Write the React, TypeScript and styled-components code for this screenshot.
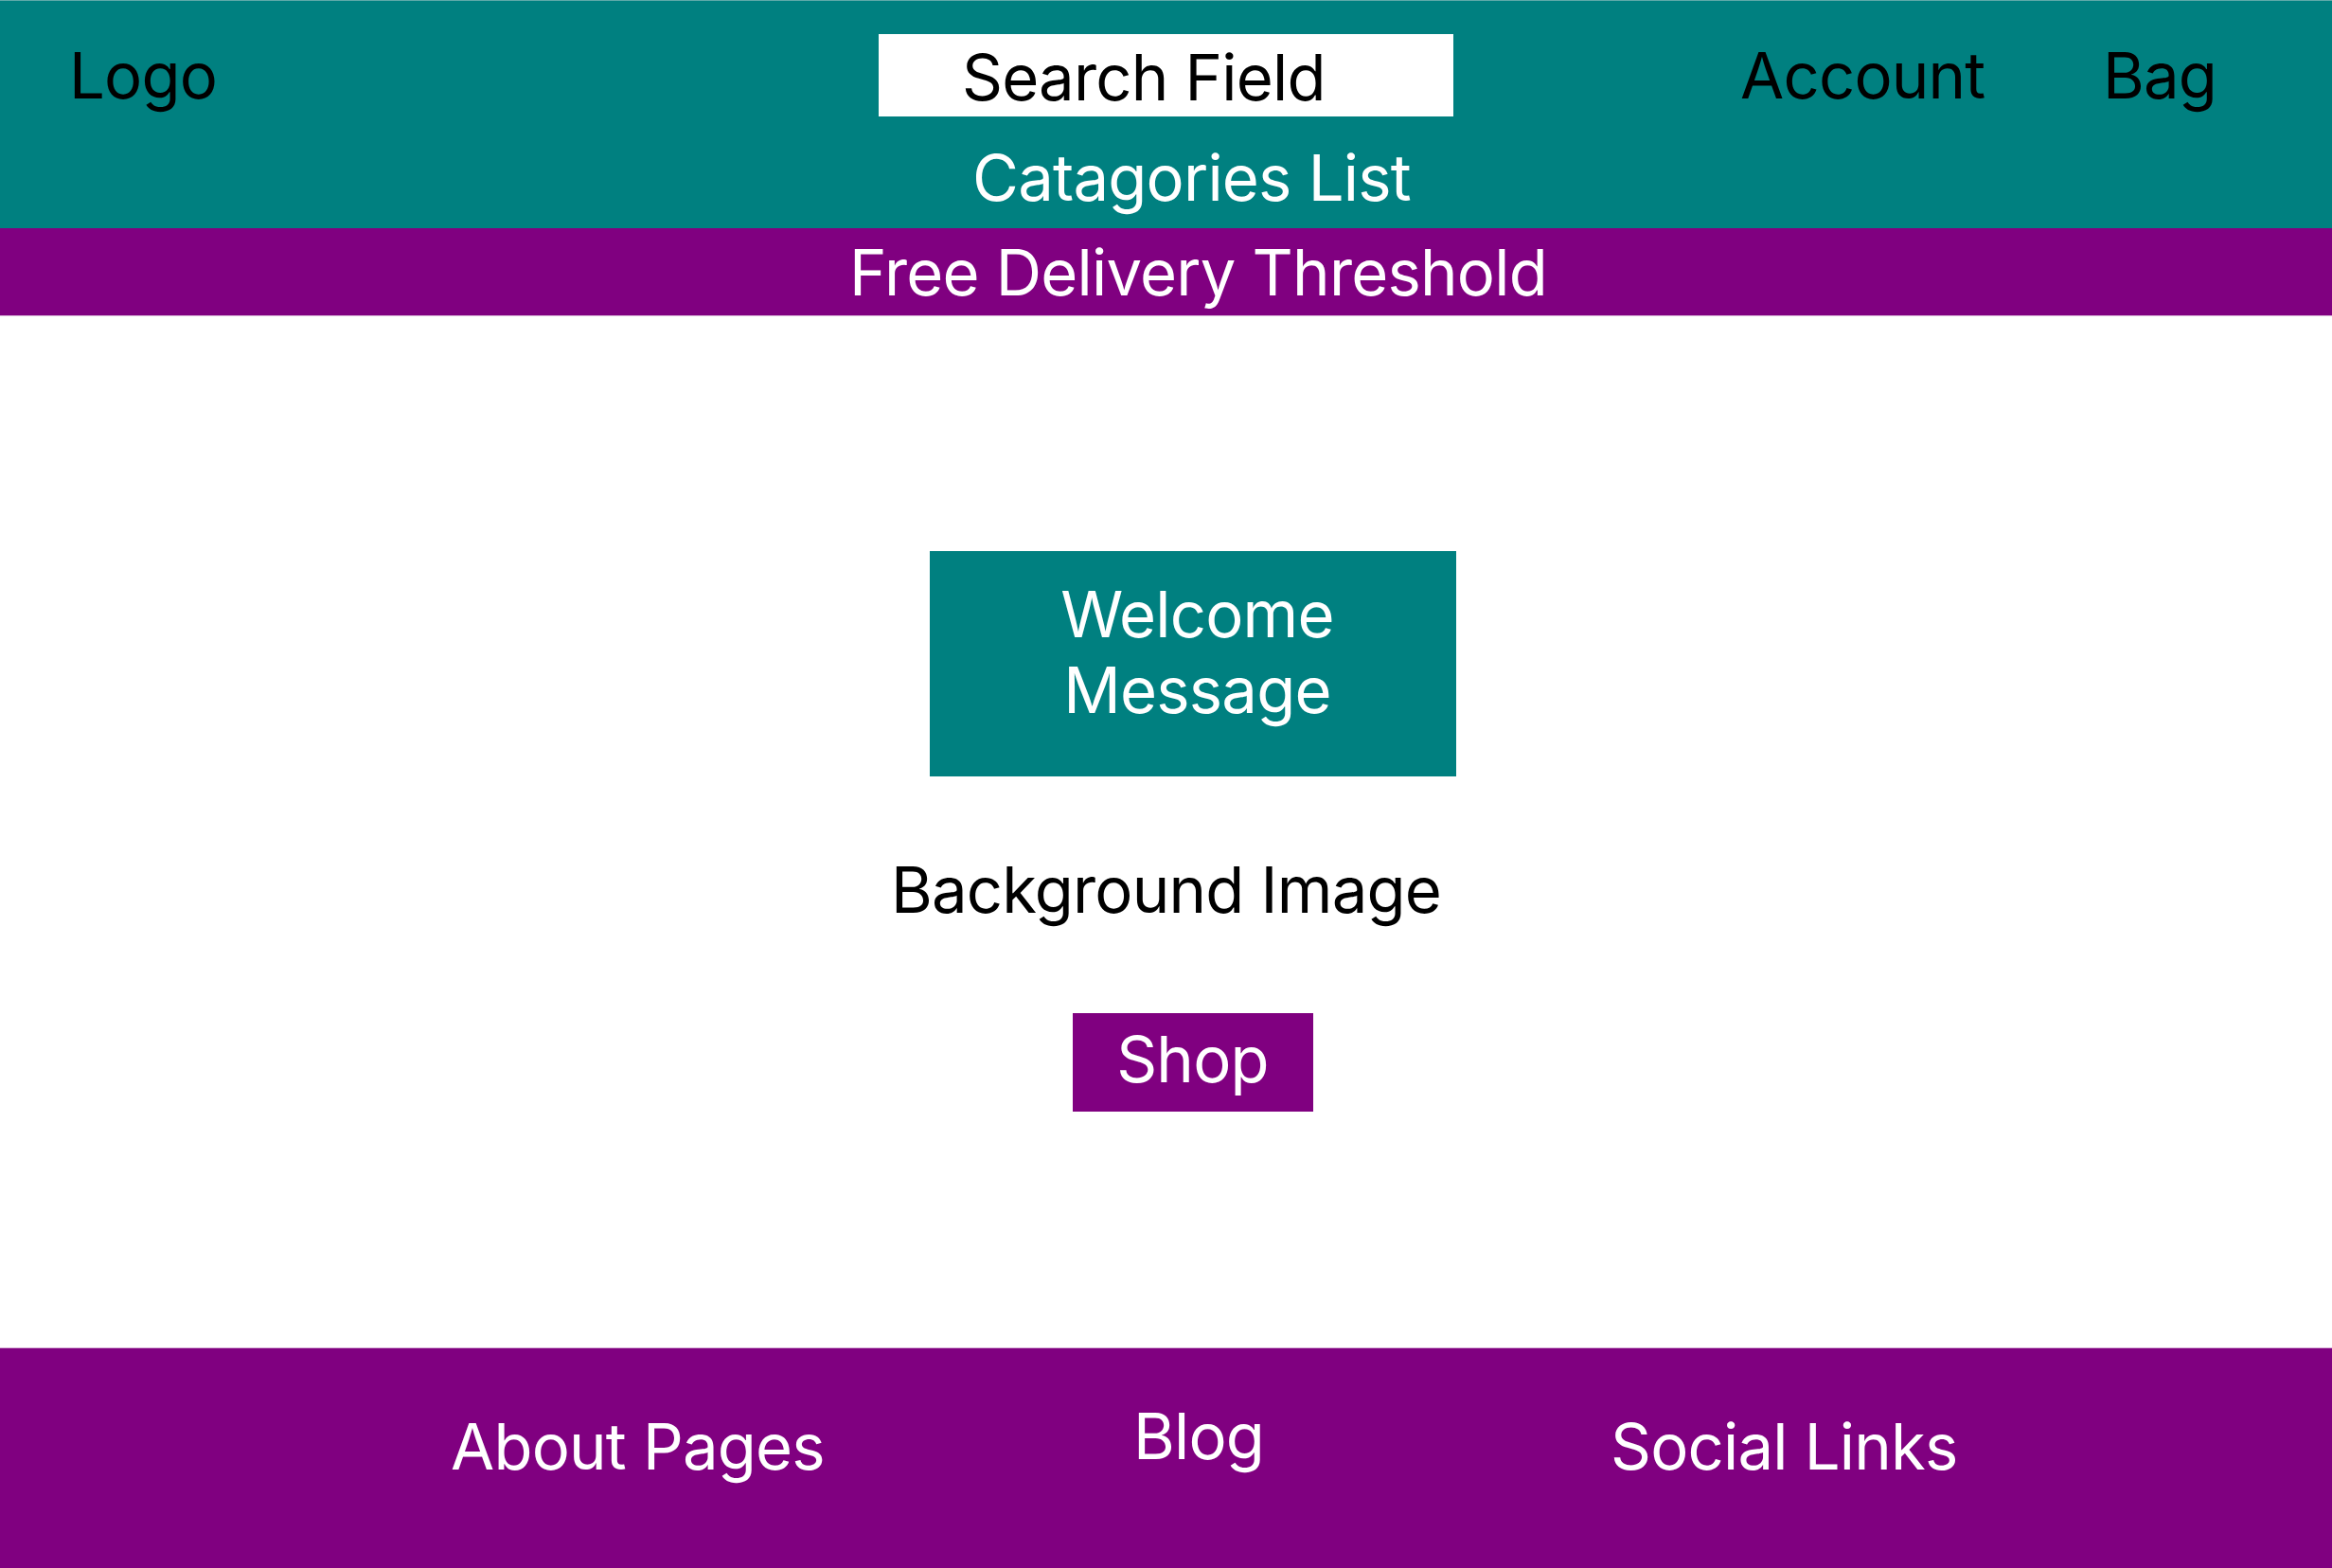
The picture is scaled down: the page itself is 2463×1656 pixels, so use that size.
import React from "react";
import styled, { createGlobalStyle } from "styled-components";

const Global = createGlobalStyle`
  html, body { margin: 0; padding: 0; background: #ffffff; }
  body { font-family: Inter, "Noto Sans", "Liberation Sans", sans-serif; }
  * { box-sizing: border-box; }
`;

const Page = styled.div`
  width: 100%;
  min-height: 1656px;
  display: flex;
  flex-direction: column;
  font-size: 67px;
  line-height: 81px;
  letter-spacing: -0.8px;
`;

const Header = styled.header`
  background: #008080;
  height: 241px;
  padding-top: 35px;
  border-top: 1px solid #5fa9a9;
  display: flex;
  flex-direction: column;
`;

const TopRow = styled.div`
  display: grid;
  grid-template-columns: 855px 910px 1fr;
  align-items: center;
  height: 87px;
  padding-left: 73px;
`;

const Logo = styled.div`
  color: #000;
`;

const SearchBox = styled.div`
  width: 607px;
  height: 87px;
  background: #ffffff;
  color: #000;
  padding: 5px 0 0 88px;
`;

const NavGroup = styled.nav`
  display: grid;
  grid-template-columns: 383px auto;
  color: #000;
`;

const NavItem = styled.span`
  color: #000;
`;

const CenteredLine = styled.div<{ $shift: number }>`
  text-align: center;
  color: #fff;
  padding-left: ${(p) => p.$shift}px;
`;

const Categories = styled(CenteredLine)`
  margin-top: 24px;
`;

const DeliveryBar = styled.div`
  background: #800080;
  height: 93px;
  padding-top: 6px;
  border-bottom: 1px solid #d8b4d8;
`;

const Hero = styled.main`
  flex: 1;
  display: flex;
  flex-direction: column;
  align-items: center;
  padding-top: 248px;
`;

const WelcomeBox = styled.div`
  width: 556px;
  height: 238px;
  margin-left: 56px;
  background: #008080;
  color: #fff;
  text-align: center;
  padding: 27px 0 0 10px;
  line-height: 80px;
`;

const BackgroundLabel = styled.div`
  margin-top: 79px;
  color: #000;
`;

const ShopButton = styled.div`
  margin-top: 90px;
  margin-left: 56px;
  width: 254px;
  height: 104px;
  padding-top: 8px;
  background: #800080;
  color: #fff;
  text-align: center;
`;

const Footer = styled.footer`
  background: #800080;
  height: 233px;
  border-top: 1px solid #d8b4d8;
  display: grid;
  grid-template-columns: 721px 504px auto;
  align-items: start;
  padding-left: 476px;
  color: #fff;
`;

const FooterLink = styled.div<{ $top: number }>`
  margin-top: ${(p) => p.$top}px;
  color: #fff;
`;

export default function App() {
  return (
    <>
      <Global />
      <Page>
        <Header>
          <TopRow>
            <Logo>Logo</Logo>
            <SearchBox>Search Field</SearchBox>
            <NavGroup>
              <NavItem>Account</NavItem>
              <NavItem>Bag</NavItem>
            </NavGroup>
          </TopRow>
          <Categories $shift={54}>Catagories List</Categories>
        </Header>
        <DeliveryBar>
          <CenteredLine $shift={68}>Free Delivery Threshold</CenteredLine>
        </DeliveryBar>
        <Hero>
          <WelcomeBox>
            Welcome
            <br />
            Message
          </WelcomeBox>
          <BackgroundLabel>Background Image</BackgroundLabel>
          <ShopButton>Shop</ShopButton>
        </Hero>
        <Footer>
          <FooterLink $top={63}>About Pages</FooterLink>
          <FooterLink $top={52}>Blog</FooterLink>
          <FooterLink $top={63}>Social Links</FooterLink>
        </Footer>
      </Page>
    </>
  );
}
